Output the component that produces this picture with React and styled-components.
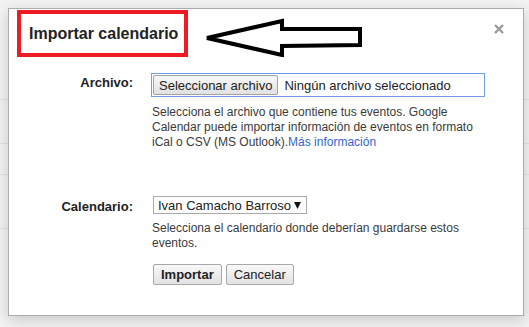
import React from "react";
import styled, { createGlobalStyle } from "styled-components";

const Global = createGlobalStyle`
  html, body { margin: 0; padding: 0; }
  body {
    margin: 0;
    padding: 8px 5px 0 8px;
    width: 529px;
    height: 327px;
    box-sizing: border-box;
    overflow: hidden;
    font-family: "Liberation Sans", Arial, sans-serif;
    background-color: #f3f3f3;
    background-image:
      linear-gradient(#e3e3e3, #e3e3e3),
      linear-gradient(#e3e3e3, #e3e3e3),
      linear-gradient(#e3e3e3, #e3e3e3),
      linear-gradient(#e3e3e3, #e3e3e3);
    background-repeat: no-repeat;
    background-size: 100% 1px;
    background-position: 0 143px, 0 174px, 0 228px, 0 99px;
  }
`;

const Dialog = styled.div`
  width: 516px;
  height: 308px;
  box-sizing: border-box;
  background: #fff;
  border: 1px solid #acacac;
  box-shadow: 0 4px 14px rgba(0, 0, 0, 0.18);
  display: flex;
  flex-direction: column;
  overflow: hidden;
`;

const Header = styled.div`
  display: flex;
  align-items: flex-start;
  height: 47px;
  margin: 1px 0 0 8px;
`;

const TitleBox = styled.div`
  width: 171px;
  height: 47px;
  box-sizing: border-box;
  border: 4px solid #ed1c24;
  padding: 0 8px;
  display: flex;
  align-items: center;
`;

const Title = styled.h1`
  margin: 0;
  font-size: 16px;
  font-weight: bold;
  color: #222;
  white-space: nowrap;
  line-height: 18px;
`;

const ArrowSvg = styled.svg`
  margin: 6px 0 0 12px;
  flex: none;
`;

const Close = styled.svg`
  margin: 14px 19px 0 auto;
  flex: none;
`;

const Form = styled.div`
  display: grid;
  grid-template-columns: 124px 334px;
  column-gap: 18px;
  margin-top: 16px;
`;

const Label = styled.div`
  text-align: right;
  font-size: 13px;
  font-weight: bold;
  color: #222;
  line-height: 15px;
  padding-top: ${(p) => p.$pt}px;
  margin-top: ${(p) => p.$mt || 0}px;
`;

const Field = styled.div`
  display: flex;
  flex-direction: column;
  margin-top: ${(p) => p.$mt || 0}px;
`;

const FileBox = styled.div`
  width: 334px;
  height: 24px;
  box-sizing: border-box;
  border: 1px solid #6f9de6;
  padding: 0 1px;
  display: flex;
  align-items: center;
  font-size: 13px;
  color: #222;
`;

const FileButton = styled.button`
  height: 20px;
  padding: 0 5px;
  border: 1px solid #a3a3a3;
  border-radius: 2px;
  background: linear-gradient(#f7f7f7, #e1e1e1);
  font-family: "Liberation Sans", Arial, sans-serif;
  font-size: 13px;
  color: #222;
`;

const FileName = styled.span`
  margin-left: 6px;
`;

const Help = styled.p`
  margin: ${(p) => p.$mt}px 0 0 1px;
  font-size: 12px;
  line-height: 15px;
  color: #3a3a3a;
`;

const Link = styled.a`
  color: #3366cc;
  text-decoration: none;
`;

const Select = styled.div`
  margin-left: 2px;
  width: 154px;
  height: 18px;
  box-sizing: border-box;
  border: 1px solid #a9a9a9;
  display: flex;
  align-items: center;
  justify-content: space-between;
  padding: 0 5px 0 4px;
  font-size: 13px;
  color: #222;
  white-space: nowrap;
`;

const Buttons = styled.div`
  display: flex;
  gap: 4px;
  margin: 13px 0 0 2px;
`;

const Button = styled.button`
  height: 21px;
  padding: 0 7px;
  border: 1px solid #a8a8a8;
  border-radius: 2px;
  background: linear-gradient(#f8f8f8, #e2e2e2);
  font-family: "Liberation Sans", Arial, sans-serif;
  font-size: 13px;
  font-weight: ${(p) => (p.$primary ? "bold" : "normal")};
  color: #222;
`;

export default function App() {
  return (
    <>
      <Global />
      <Dialog>
        <Header>
          <TitleBox>
            <Title>Importar calendario</Title>
          </TitleBox>
          <ArrowSvg width="166" height="41" viewBox="0 0 166 41">
            <polygon
              points="7,22 82,5 82,13 160,13 160,29 82,30 82,39"
              fill="#fff"
              stroke="#000"
              strokeWidth="4"
              strokeLinejoin="miter"
            />
          </ArrowSvg>
          <Close width="10" height="10" viewBox="0 0 10 10">
            <path d="M1 1L9 9M9 1L1 9" stroke="#9a9a9a" strokeWidth="2.4" />
          </Close>
        </Header>
        <Form>
          <Label $pt={2}>Archivo:</Label>
          <Field>
            <FileBox>
              <FileButton>Seleccionar archivo</FileButton>
              <FileName>Ningún archivo seleccionado</FileName>
            </FileBox>
            <Help $mt={8}>
              Selecciona el archivo que contiene tus eventos. Google Calendar
              puede importar información de eventos en formato iCal o CSV (MS
              Outlook).<Link href="#">Más información</Link>
            </Help>
          </Field>
          <Label $pt={3} $mt={46}>Calendario:</Label>
          <Field $mt={46}>
            <Select>
              <span>Ivan Camacho Barroso</span>
              <svg width="7" height="7" viewBox="0 0 7 7">
                <path d="M0 0H7L3.5 7Z" fill="#111" />
              </svg>
            </Select>
            <Help $mt={7}>
              Selecciona el calendario donde deberían guardarse estos eventos.
            </Help>
            <Buttons>
              <Button $primary>Importar</Button>
              <Button>Cancelar</Button>
            </Buttons>
          </Field>
        </Form>
      </Dialog>
    </>
  );
}
